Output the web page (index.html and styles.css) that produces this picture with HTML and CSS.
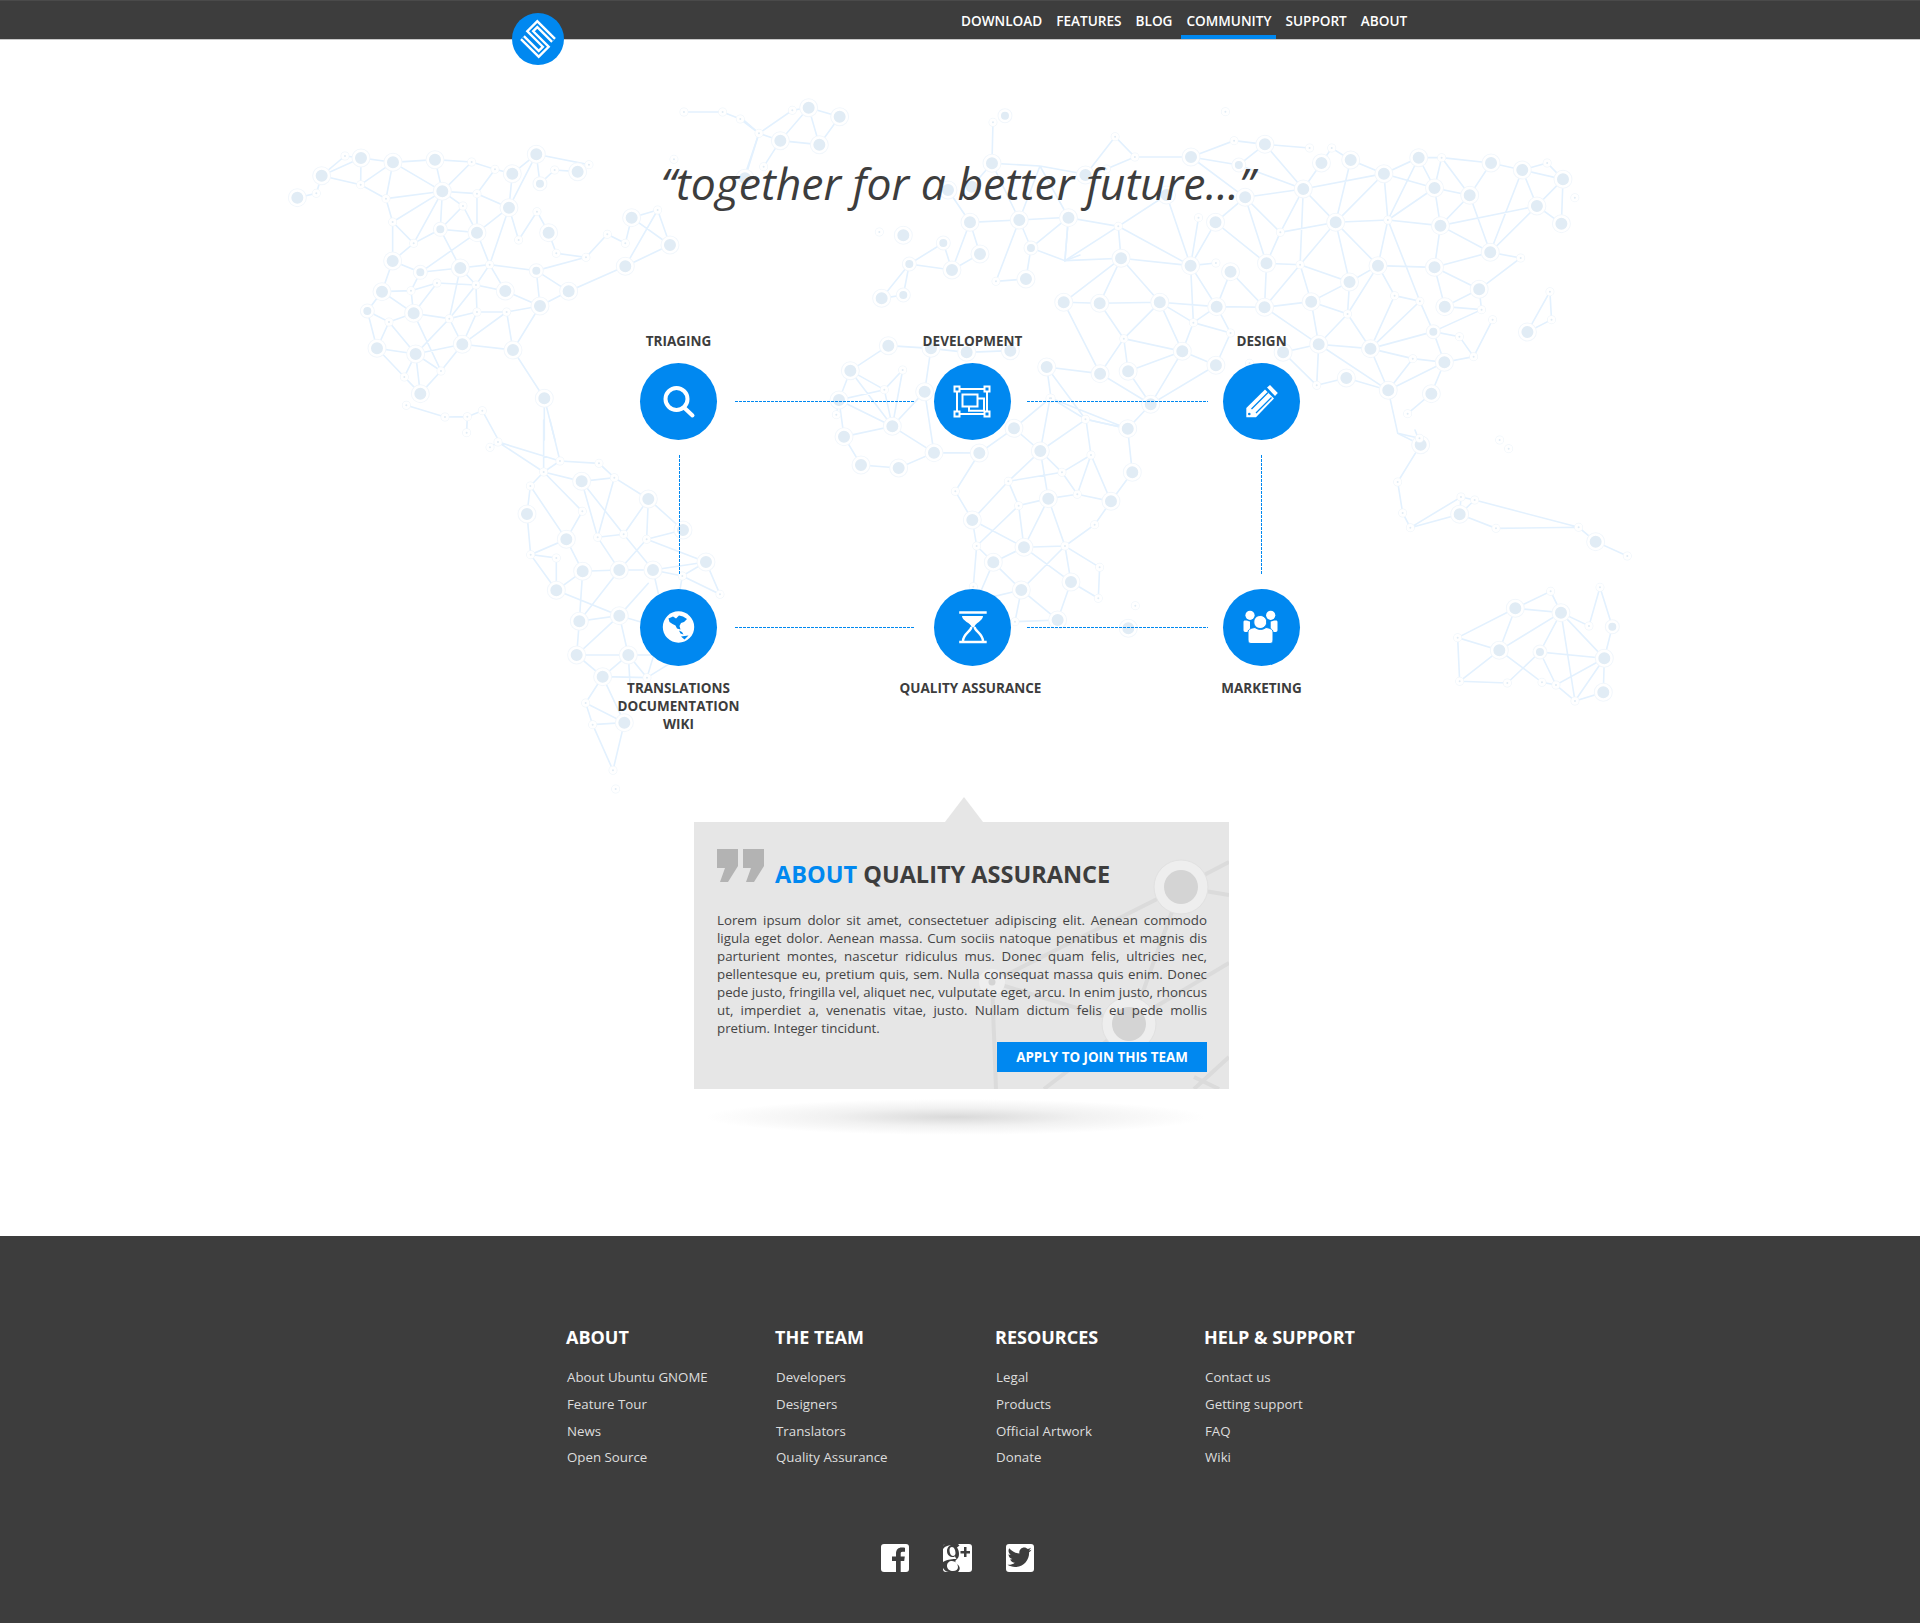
FILE: index.html
```html
<!DOCTYPE html>
<html lang="en">
<head>
    <meta charset="UTF-8">
    <title>Community - Ubuntu GNOME</title>
    <link rel="stylesheet" href="styles.css">
</head>
<body>
    <!-- world map behind the hero -->
    <svg class="map" width="1920" height="800" aria-hidden="true">
        <defs>
            <g id="nodes-big">
                <path transform="translate(280 100) scale(.3333)" d="M52 293h0M125 227h0M243 174h0M339 187h0M465 179h0M697 221h0M769 163h0M893 215h0M487 274h0M687 323h0M591 398h0M806 398h0M1055 353h0M1170 435h0M1036 499h0M338 483h0M541 504h0M866 574h0M676 573h0M780 618h0M306 575h0M401 640h0M547 733h0M407 762h0M291 745h0M699 750h0M421 881h0M793 895h0"/>
                <path transform="translate(740 90) scale(.3333)" d="M206 53h0M299 80h0M121 152h0M238 164h0M15 265h0M756 220h0M690 397h0M838 390h0M624 300h0M490 436h0M636 540h0M720 492h0M425 625h0M858 567h0M695 290h0"/>
                <path transform="translate(1040 100) scale(.3953 .3333)" d="M115 225h0M382 171h0M569 133h0M712 189h0M786 180h0M870 221h0M958 173h0M1141 189h0M1220 210h0M1323 238h0M1319 371h0M1257 318h0M998 264h0M1087 286h0M1013 377h0M1139 457h0M666 267h0M519 292h0M748 367h0M444 367h0M72 353h0M205 475h0M381 497h0M482 515h0M573 490h0M855 497h0M998 502h0M783 546h0M1111 568h0M686 605h0M60 607h0M151 610h0M303 607h0M447 620h0M568 622h0M1024 620h0M1233 696h0M705 733h0M836 746h0M360 754h0M445 796h0M17 801h0M152 821h0M223 814h0M615 757h0M1023 787h0M881 871h0M775 834h0M990 881h0M280 913h0M222 986h0M320 285h0"/>
                <path transform="translate(820 340) scale(.3333)" d="M205 17h0M333 25h0M440 37h0M571 32h0M91 92h0M314 155h0M217 259h0M72 290h0M123 375h0M236 384h0M342 338h0M478 339h0M582 265h0M661 333h0M937 397h0M873 484h0M685 476h0M457 540h0M612 622h0M520 667h0M604 750h0M753 726h0M713 840h0M925 865h0M57 180h0"/>
                <path transform="translate(480 420) scale(.3333)" d="M305 184h0M505 237h0M141 282h0M609 330h0M259 358h0M678 426h0M308 454h0M418 450h0M519 450h0M229 511h0M298 604h0M418 587h0M290 705h0M445 705h0M368 770h0M433 908h0"/>
                <path transform="translate(1340 430) scale(.3333)" d="M242 44h0M359 253h0M767 335h0M526 535h0M663 548h0M478 661h0M793 685h0M790 787h0"/>
            </g>
            <g id="nodes-mid">
                <path transform="translate(280 100) scale(.3333)" d="M780 251h0M481 388h0M421 517h0M769 512h0M262 633h0"/>
                <path transform="translate(740 90) scale(.3333)" d="M610 459h0M508 522h0M490 615h0M795 77h0M873 474h0"/>
                <path transform="translate(1040 100) scale(.3953 .3333)" d="M503 195h0M995 695h0"/>
                <path transform="translate(1340 430) scale(.3333)" d="M817 590h0M600 666h0"/>
            </g>
            <g id="nodes-small">
                <path transform="translate(280 100) scale(.3333)" d="M109 280h0M195 168h0M242 254h0M318 296h0M338 366h0M401 430h0M575 186h0M645 208h0M591 281h0M549 318h0M824 210h0M927 194h0M771 335h0M716 420h0M829 460h0M918 472h0M982 403h0M1036 430h0M1133 330h0M629 494h0M471 549h0M393 572h0M588 555h0M327 666h0M508 656h0M591 636h0M680 636h0M483 813h0M373 831h0M379 916h0M495 951h0M562 950h0M607 932h0M560 998h0M1212 36h0M1328 36h0M1381 57h0M1182 178h0"/>
                <path transform="translate(740 90) scale(.3333)" d="M157 61h0M57 130h0M71 230h0M759 97h0M418 426h0M768 574h0"/>
                <path transform="translate(1040 100) scale(.3953 .3333)" d="M469 35h0M190 110h0M240 171h0M491 122h0M682 144h0M738 144h0M168 207h0M1016 173h0M1283 189h0M1353 293h0M401 353h0M198 379h0M608 397h0M880 360h0M445 489h0M658 494h0M1216 474h0M897 587h0M961 604h0M778 642h0M1117 629h0M1145 659h0M1290 575h0M1294 659h0M388 668h0M212 716h0M482 699h0M1061 710h0M1097 770h0M943 776h0M700 856h0M930 941h0M28 895h0M115 958h0M530 790h0M960 1015h0"/>
                <path transform="translate(820 340) scale(.3333)" d="M248 90h0M193 149h0M49 224h0M690 175h0M813 345h0M726 397h0M565 424h0M772 463h0M596 497h0M406 454h0M824 554h0M470 618h0M735 618h0M839 682h0M835 775h0M946 797h0M585 845h0M460 740h0"/>
                <path transform="translate(480 420) scale(.3333)" d="M30 82h0M54 66h0M240 123h0M357 130h0M191 156h0M403 173h0M151 198h0M307 274h0M353 352h0M431 343h0M500 358h0M152 404h0M229 414h0M607 468h0M720 523h0M501 773h0M317 849h0M338 914h0M399 1051h0M407 1107h0"/>
                <path transform="translate(1340 430) scale(.3333)" d="M173 156h0M188 249h0M211 293h0M363 201h0M404 210h0M468 295h0M716 292h0M862 378h0M479 30h0M506 56h0M632 484h0M780 472h0M747 588h0M353 623h0M359 754h0M502 759h0M606 757h0M648 765h0M705 813h0"/>
            </g>
        </defs>
        <g class="edges">
            <path transform="translate(280 100) scale(.3333)" d="M52 293L109 280L125 227L195 168L243 174L125 227L242 254L243 174L339 187L242 254L318 296L339 187L465 179L487 274L339 187M465 179L575 186L645 208L591 281L487 274L575 186M645 208L697 221L687 323L769 163L697 221M769 163L780 251L824 210L893 215L927 194L769 163M318 296L487 274L549 318L591 398L481 388L487 274L401 430L338 366L487 274M318 296L338 366L338 483L401 430L481 388L549 318M591 281L591 398L687 323L591 281M687 323L629 494L591 398L421 517L338 483M687 323L716 420L771 335L806 398L829 460L918 472L982 403L1036 430L1055 353L1133 330L1036 499L1170 435L1133 330M1055 353L1170 435M1036 499L866 574L769 512L918 472M866 574L780 618L769 512L629 494L541 504L421 517M481 388L541 504L508 656L588 555L541 504M629 494L676 573L588 555L471 549L393 572L421 517L393 572L306 575L338 483M629 494L588 555L591 636L508 656L401 640L393 572M401 640L471 549M676 573L780 618L680 636L591 636L547 733L680 636L699 750L547 733L407 762L291 745L262 633L306 575L401 640L327 666L262 633M327 666L291 745M327 666L407 762L508 656L547 733M401 640L483 813L407 762L373 831L291 745M407 762L421 881L373 831M547 733L483 813L421 881M780 618L699 750L793 895L793 1020M793 895L825 1020M379 916L495 951L562 950L607 932L655 1020M562 950L560 998M1212 36L1328 36L1381 57L1437 100L1395 225"/>
            <path transform="translate(740 90) scale(.3333)" d="M5 85L57 130L157 61L206 53L121 152L57 130L15 265M121 152L71 230M206 53L299 80L238 164L206 53M121 152L238 164M759 97L756 220L900 228L1020 250M756 220L695 290M900 228L838 390L756 220M624 300L690 397L838 390L985 382L900 228M690 397L636 540L508 522L610 459L636 540L720 492L690 397M508 522L490 615L425 625L508 522M838 390L873 474L975 512L985 382L873 474L858 567L768 574L838 390M975 512L1020 495"/>
            <path transform="translate(1040 100) scale(.3953 .3333)" d="M190 110L240 171L168 207L115 225M190 110L115 225M240 171L382 171L491 122L569 133L682 144M382 171L503 195L666 267L569 133L503 195M382 171L519 292M712 189L666 267M712 189L738 144L786 180L870 221L666 267M786 180L748 367L870 221L958 173L1016 173L1141 189L1220 210L1283 189L1323 238L1220 210M1323 238L1257 318L1319 371L1323 238M870 221L880 360L958 173L998 264L870 221M998 264L1016 173L1087 286L998 264L1013 377L1087 286L1141 189M1220 210L1139 457L1087 286M1220 210L1257 318L1013 377L1139 457L1257 318M880 360L998 264M880 360L1013 377M748 367L880 360M666 267L748 367L608 397L666 267L658 494M519 292L666 267M519 292L573 490L444 367L519 292L608 397L573 490M444 367L381 497L401 353M320 285L381 497M320 285L198 379L72 353L63 482L198 379L205 475L63 482M198 379L381 497L205 475M381 497L388 668M381 497L445 489M381 497L447 620L482 515L568 622L573 490L658 494L568 622M658 494L748 367L855 497L783 546L748 367M658 494L783 546L686 605L658 494M855 497L880 360L961 604M855 497L998 502L1013 377M998 502L1139 457M998 502L1111 568L1216 474L1139 457M855 497L778 642L783 546M855 497L897 587L836 746L961 604L897 587M686 605L778 642L836 746L705 733L778 642M686 605L705 733L568 622L686 605M568 622L447 620L388 668L303 607L447 620M1111 568L1024 620L998 502M1111 568L1117 629L1024 620M1117 629L995 695L1061 710L1097 770L1145 659M961 604L995 695L836 746L943 776L1023 787L995 695M943 776L881 871L1023 787L1097 770M1023 787L990 881L930 941M836 746L881 871L705 733L700 856L615 757L705 733L836 746M775 834L700 856M775 834L881 871L905 1000L960 1015M60 607L151 610L303 607L205 475L60 607M151 610L205 475M303 607L212 716L151 610M212 716L360 754L303 607M388 668L482 699L447 620M388 668L360 754L445 796L482 699M360 754L280 913L223 814L212 716L152 821L60 607M223 814L360 754M17 801L152 821L280 913M17 801L28 895L115 958L222 986L280 913L445 796M17 801L115 958M28 895L222 986M1233 696L1290 575L1294 659L1233 696"/>
            <path transform="translate(820 340) scale(.3333)" d="M205 17L91 92L57 180L217 259L91 92M91 92L193 149L217 259L248 90L193 149L57 180L49 224M72 290L217 259L314 155L333 25L205 17M57 180L72 290L123 375L236 384L342 338L217 259M314 155L342 338L478 339L582 265L690 175M333 25L440 37L571 32M582 265L661 333M478 339L406 454L457 540L470 618L520 667L612 622L457 540L565 424L661 333L690 175M661 333L798 238L813 345L726 397L565 424M661 333L726 397L772 463L813 345L873 484L772 463L685 476L596 497L565 424M661 333L685 476L612 622L596 497L470 618M685 476L735 618L612 622M735 618L824 554L873 484L937 397L923 266L798 238M612 622L753 726L735 618L839 682L835 775L753 726L713 840L604 750L735 618M520 667L604 750L585 845L713 840M470 618L460 740M520 667L480 760M604 750L520 770"/>
            <path transform="translate(480 420) scale(.3333)" d="M30 82L54 66L240 123L191 156L54 66M191 0L191 156M210 0L240 123L357 130L403 173L505 237L609 330M191 156L305 184L403 173L353 352L305 184L431 343L505 237L500 358L609 330M500 358L678 426M191 156L151 198L141 282L152 404L229 511M151 198L259 358L152 404L229 414L229 511L308 454L259 358L307 274L191 156M308 454L418 450L519 450L678 426M353 352L418 450L500 358M353 352L431 343L519 450L607 468L678 426L720 523L607 468L600 510M519 450L535 520M418 450L298 604L308 454M229 511L418 587L298 604L290 705L418 587L445 705L290 705L368 770L445 705L501 773L368 770L317 849L338 914L433 908L317 849M505 490L418 587L480 605M501 773L520 710M445 705L520 705M501 773L570 730M368 770L433 908L399 1051L338 914M445 705L450 790"/>
            <path transform="translate(1340 430) scale(.3333)" d="M177 12L242 44L225 0M242 44L173 156L188 249L211 293L363 201L404 210L359 253L211 293M363 201L359 253L468 295L716 292L767 335L862 378M404 210L716 292M353 623L526 535L632 484L663 548L526 535L478 661L353 623L359 754L478 661L663 548L747 588L780 472L817 590L793 685L663 548L600 666L793 685L648 765L600 666L502 759L359 754M478 661L606 757L648 765L705 813L663 548M705 813L793 685L790 787L705 813"/>
        </g>
        <use href="#nodes-big" class="ring-big"/>
        <use href="#nodes-big" class="gap-big"/>
        <use href="#nodes-big" class="core-big"/>
        <use href="#nodes-mid" class="ring-mid"/>
        <use href="#nodes-mid" class="gap-mid"/>
        <use href="#nodes-mid" class="core-mid"/>
        <use href="#nodes-small" class="ring-small"/>
        <use href="#nodes-small" class="gap-small"/>
        <use href="#nodes-small" class="core-small"/>
    </svg>

    <header class="topbar">
        <a class="logo" href="#">
            <svg width="52" height="52" viewBox="0 0 52 52">
                <circle cx="26" cy="26" r="26" fill="#0088f0"/>
                <g transform="rotate(45 26 26)" fill="none">
                    <path d="M38 16H15V26H37V36H14" stroke="#fff" stroke-width="6.500"/>
                    <path d="M38 16H15V26H37V36H14" stroke="#0088f0" stroke-width="1.800"/>
                </g>
            </svg>
        </a>
        <nav class="mainnav">
            <a href="#">DOWNLOAD</a>
            <a href="#">FEATURES</a>
            <a href="#">BLOG</a>
            <a href="#" class="active">COMMUNITY</a>
            <a href="#">SUPPORT</a>
            <a href="#">ABOUT</a>
        </nav>
    </header>

    <main>
        <h1 class="motto">“together for a better future...”</h1>

        <div class="teams">
            <div class="label">TRIAGING</div>
            <div></div>
            <div class="label">DEVELOPMENT</div>
            <div></div>
            <div class="label">DESIGN</div>

            <div class="bubble">
                <svg width="77" height="77" viewBox="0 0 77 77" fill="none" stroke="#fff">
                    <circle cx="36.500" cy="36" r="11" stroke-width="4"/>
                    <path d="M44.500 45L52.500 52.500" stroke-width="4" stroke-linecap="round"/>
                </svg>
            </div>
            <div class="link-h link-a"></div>
            <div class="bubble">
                <svg width="77" height="77" viewBox="0 0 77 77" fill="none" stroke="#fff" stroke-width="2">
                    <rect x="23" y="26" width="30" height="25"/>
                    <rect x="28.500" y="31.500" width="15" height="12"/>
                    <path d="M43.500 35.500H50V47.800H35V43.500"/>
                    <g fill="#0088f0">
                        <rect x="20.500" y="23.500" width="5" height="5"/>
                        <rect x="50.500" y="23.500" width="5" height="5"/>
                        <rect x="20.500" y="48.500" width="5" height="5"/>
                        <rect x="50.500" y="48.500" width="5" height="5"/>
                    </g>
                </svg>
            </div>
            <div class="link-h link-b"></div>
            <div class="bubble">
                <svg width="77" height="77" viewBox="0 0 77 77" fill="#fff">
                    <path d="M23.300 45L42 26.500L51 35.500L33 54.200H23.300Z"/>
                    <path d="M44 24.500L47 22L54.800 30L52 33Z"/>
                    <path d="M28.500 46L45 29.500M33 50L48.500 34.500" stroke="#0088f0" stroke-width="1.300"/>
                    <circle cx="26.300" cy="51" r="1.300" fill="#0088f0"/>
                </svg>
            </div>

            <div class="link-v link-v-left"></div>
            <div></div>
            <div></div>
            <div></div>
            <div class="link-v"></div>

            <div class="bubble">
                <svg width="77" height="77" viewBox="0 0 77 77">
                    <circle cx="38.500" cy="38" r="15.700" fill="#fff"/>
                    <path fill="#0088f0" d="M28.500 29.500L33 27.500L36 29.500L39 26.500L43 27.500L47 30L44 33L41 34L39.500 37L40.500 40.500L37 39.500L35.500 36.500L32.500 35L29.500 33ZM39 41.500L42 43L43.500 45.500L40.500 44.500ZM41 47.500L48.500 46.500L44.500 50.500Z"/>
                </svg>
            </div>
            <div class="link-h link-a"></div>
            <div class="bubble">
                <svg width="77" height="77" viewBox="0 0 77 77" fill="#fff">
                    <path d="M25.200 22.300H52.700V24.700H25.200ZM25.200 51.800H52.700V54.200H25.200Z"/>
                    <path d="M28 27H49C49 32 41 34 40.500 38H37.500C37 34 28 32 28 27Z"/>
                    <path d="M37.500 38C37 42 29 45 29 52M40.500 38C41 42 49 45 49 52" fill="none" stroke="#fff" stroke-width="2.400"/>
                </svg>
            </div>
            <div class="link-h link-b"></div>
            <div class="bubble">
                <svg width="77" height="77" viewBox="0 0 77 77" fill="#fff">
                    <circle cx="27" cy="26.300" r="4.600"/>
                    <circle cx="47.700" cy="26.300" r="4.600"/>
                    <path d="M20.500 33C20.500 30.500 24 31.500 27 32.500V43H22.500C21 43 20.500 42 20.500 41ZM54.500 33C54.500 30.500 51 31.500 47.700 32.500V43H52.500C54 43 54.500 42 54.500 41Z"/>
                    <path d="M37.200 26.500C41 26.500 43.700 29.500 43.700 33C43.700 36.500 41 39.500 37.200 39.500C33.500 39.500 30.800 36.500 30.800 33C30.800 29.500 33.500 26.500 37.200 26.500Z" stroke="#0088f0"/>
                    <path d="M25 43C25 40 29 39 32 38.500C35 41 40 41 43 38.500C46 39 50 40 50 43V51C50 53 49 54.500 47 54.500H28C26 54.500 25 53 25 51Z" stroke="#0088f0"/>
                </svg>
            </div>

            <div class="label label-below">TRANSLATIONS<br>DOCUMENTATION<br>WIKI</div>
            <div></div>
            <div class="label label-below qa-label">QUALITY ASSURANCE</div>
            <div></div>
            <div class="label label-below">MARKETING</div>
        </div>

        <section class="about">
            <svg class="about-bg" width="535" height="267" aria-hidden="true">
                <path fill="none" stroke="#dbdbdb" stroke-width="4" d="M487 65L535 40M487 65L535 73M487 65L298 160L302 267M487 65L475 98L447 175L435 202L298 160M451 191L535 141M435 202L350 267M535 235L500 267M500 255L525 267"/>
                <circle cx="487" cy="65" r="27" fill="#eeeeee" stroke="#e1e1e1"/>
                <circle cx="487" cy="65" r="17" fill="#d4d4d4"/>
                <circle cx="435" cy="202" r="27" fill="#eeeeee" stroke="#e1e1e1"/>
                <circle cx="435" cy="202" r="17" fill="#d4d4d4"/>
                <circle cx="298" cy="160" r="13" fill="#eeeeee"/>
                <circle cx="298" cy="160" r="3.500" fill="#d4d4d4"/>
            </svg>
            <div class="about-head">
                <svg class="quote-mark" width="47" height="33" viewBox="0 0 47 33" fill="#b3b3b3">
                    <path d="M0 0H21V17L11 33H3L8 19H0ZM26 0H47V17L37 33H29L34 19H26Z"/>
                </svg>
                <h2><span class="blue">ABOUT</span> QUALITY ASSURANCE</h2>
            </div>
            <p>Lorem ipsum dolor sit amet, consectetuer adipiscing elit. Aenean commodo ligula eget dolor. Aenean massa. Cum sociis natoque penatibus et magnis dis parturient montes, nascetur ridiculus mus. Donec quam felis, ultricies nec, pellentesque eu, pretium quis, sem. Nulla consequat massa quis enim. Donec pede justo, fringilla vel, aliquet nec, vulputate eget, arcu. In enim justo, rhoncus ut, imperdiet a, venenatis vitae, justo. Nullam dictum felis eu pede mollis pretium. Integer tincidunt.</p>
            <a class="apply" href="#">APPLY TO JOIN THIS TEAM</a>
        </section>
        <div class="about-shadow"></div>
    </main>

    <footer>
        <div class="footer-cols">
            <div>
                <h3>ABOUT</h3>
                <ul>
                    <li>About Ubuntu GNOME</li>
                    <li>Feature Tour</li>
                    <li>News</li>
                    <li>Open Source</li>
                </ul>
            </div>
            <div>
                <h3>THE TEAM</h3>
                <ul>
                    <li>Developers</li>
                    <li>Designers</li>
                    <li>Translators</li>
                    <li>Quality Assurance</li>
                </ul>
            </div>
            <div>
                <h3>RESOURCES</h3>
                <ul>
                    <li>Legal</li>
                    <li>Products</li>
                    <li>Official Artwork</li>
                    <li>Donate</li>
                </ul>
            </div>
            <div>
                <h3>HELP &amp; SUPPORT</h3>
                <ul>
                    <li>Contact us</li>
                    <li>Getting support</li>
                    <li>FAQ</li>
                    <li>Wiki</li>
                </ul>
            </div>
        </div>
        <div class="social">
            <svg width="28" height="28" viewBox="0 0 28 28">
                <rect width="28" height="28" rx="3" fill="#fff"/>
                <path fill="#3d3d3d" d="M15 28V17H11V12.500H15V9.500C15 5.500 17.500 3.500 20.500 3.500C22 3.500 23.500 3.600 24 3.700V7.800H21.500C20 7.800 19.700 8.500 19.700 9.800V12.500H23.800L23.200 17H19.700V28Z"/>
            </svg>
            <svg width="29" height="28" viewBox="0 0 29 28">
                <rect width="29" height="28" rx="3" fill="#fff"/>
                <path fill="#3d3d3d" d="M21 3H23.500V7H27V9.500H23.500V13H21V9.500H17.500V7H21Z"/>
                <path fill="#3d3d3d" d="M15 0H3C0 0 0 2 0 3V5C2 2 6 1 9 1C7 1 4 3 4 7C4 11 7 13 10 13C11 13 12 12.500 12 12C12 13 13 14 13.500 15C10 15 5 15 0 18V24C2 27 4 28 6 28H15C17 26 18 23 14 20C12 18 12 17 13 16C15 14.500 16 13 16 10C16 7 15 5 14 3.500L16.500 1.500ZM9 3C11 3 12.500 6 12.500 9C12.500 11 11.500 12 10 12C8 12 6.500 9 6.500 6C6.500 4 7.500 3 9 3ZM9 17C12 17 15 20 15 23C15 25.500 13 27 10 27C7 27 4 25 4 22C4 19 6 17 9 17Z"/>
            </svg>
            <svg width="28" height="28" viewBox="0 0 28 28">
                <rect width="28" height="28" rx="3" fill="#fff"/>
                <path fill="#3d3d3d" d="M25.500 5.700C24.600 6.100 23.700 6.400 22.700 6.500C23.700 5.900 24.500 4.900 24.900 3.800C24 4.400 22.900 4.800 21.800 5C20.900 4 19.600 3.400 18.200 3.400C15.500 3.400 13.300 5.600 13.300 8.300C13.300 8.700 13.300 9.100 13.400 9.400C9.300 9.200 5.700 7.200 3.200 4.200C2.800 4.900 2.500 5.800 2.500 6.700C2.500 8.400 3.400 9.900 4.700 10.800C3.900 10.800 3.100 10.600 2.500 10.200V10.300C2.500 12.700 4.200 14.700 6.400 15.100C6 15.200 5.600 15.300 5.100 15.300C4.800 15.300 4.500 15.300 4.200 15.200C4.800 17.200 6.700 18.600 8.800 18.700C7.100 20 5 20.800 2.700 20.800C2.300 20.800 1.900 20.800 1.500 20.700C3.700 22.100 6.300 22.900 9.100 22.900C18.200 22.900 23.100 15.400 23.100 8.900V8.300C24 7.600 24.900 6.700 25.500 5.700Z"/>
            </svg>
        </div>
    </footer>
</body>
</html>
```

FILE: styles.css
```css
body {
    margin: 0;
    background-color: #fff;
    color: #3d3d3d;
    font-family: "Open Sans", sans-serif;
}

a {
    text-decoration: none;
}

/* map */
.map {
    position: absolute;
    top: 0;
    left: 0;
    z-index: -1;
}

.map path {
    fill: none;
    stroke-linecap: round;
    vector-effect: non-scaling-stroke;
}

.edges {
    stroke: #e3f1fe;
    stroke-width: 1.600;
}

.ring-big { stroke: #f2f7fc; stroke-width: 19; }
.gap-big { stroke: #fff; stroke-width: 17; }
.core-big { stroke: #e1ecf5; stroke-width: 12; }
.ring-mid { stroke: #f2f7fc; stroke-width: 15; }
.gap-mid { stroke: #fff; stroke-width: 13; }
.core-mid { stroke: #e1ecf5; stroke-width: 8; }
.ring-small { stroke: #f0f6fb; stroke-width: 9; }
.gap-small { stroke: #fff; stroke-width: 7.500; }
.core-small { stroke: #e1ecf5; stroke-width: 2; }

/* top bar */
.topbar {
    position: relative;
    box-sizing: border-box;
    height: 40px;
    background-color: #3d3d3d;
    border-top: 1px solid #4a4a4a;
    border-bottom: 1px solid #c8c8c8;
}

.logo {
    position: absolute;
    top: 12px;
    left: 512px;
    display: block;
    height: 52px;
}

.mainnav {
    display: flex;
    gap: 4px;
    margin-left: 956px;
    height: 38px;
}

.mainnav a {
    box-sizing: border-box;
    height: 38px;
    padding: 0 5px;
    color: #fff;
    font-size: 13.600px;
    font-weight: 600;
    line-height: 39px;
}

.mainnav a.active {
    border-bottom: 4px solid #0088f0;
}

/* hero */
.motto {
    margin: 113px 0 0;
    padding-right: 5px;
    text-align: center;
    font-size: 44.500px;
    font-style: italic;
    font-weight: 400;
    line-height: 60px;
    color: #3d3d3d;
}

.teams {
    display: grid;
    grid-template-columns: 77px 217px 77px 212px 77px;
    grid-template-rows: 31px 77px 149px 77px auto;
    margin: 119px 0 0 640px;
    width: 660px;
}

.label {
    justify-self: center;
    font-size: 13.500px;
    font-weight: 700;
    line-height: 18px;
    text-align: center;
    white-space: nowrap;
}

.label-below {
    padding-top: 13px;
}

.qa-label {
    position: relative;
    left: -2px;
}

.bubble {
    width: 77px;
    height: 77px;
    border-radius: 50%;
    background-color: #0088f0;
}

.bubble svg {
    display: block;
}

.link-h {
    align-self: center;
    height: 1px;
    background: repeating-linear-gradient(90deg, #0088f0 0 3px, transparent 3px 4px);
}

.link-a {
    margin: 0 19px 0 18px;
}

.link-b {
    margin: 0 15px 0 16px;
}

.link-v {
    justify-self: center;
    width: 1px;
    margin: 15px 0;
    background: repeating-linear-gradient(180deg, #0088f0 0 3px, transparent 3px 4px);
}

.link-v-left {
    margin-left: 2px;
}

/* about box */
.about {
    position: relative;
    box-sizing: border-box;
    width: 535px;
    height: 267px;
    margin: 89px 0 0 694px;
    padding: 27px 22px 0 23px;
    background-color: #e6e6e6;
}

.about::before {
    content: "";
    position: absolute;
    top: -25px;
    left: 251px;
    border-left: 19px solid transparent;
    border-right: 19px solid transparent;
    border-bottom: 25px solid #e6e6e6;
}

.about-bg {
    position: absolute;
    top: 0;
    left: 0;
}

.about-head {
    position: relative;
    display: flex;
    gap: 11px;
    height: 42px;
}

.quote-mark {
    flex: none;
}

.about h2 {
    margin: 8px 0 0;
    font-size: 23.500px;
    font-weight: 700;
    line-height: 34px;
    white-space: nowrap;
}

.blue {
    color: #0088f0;
}

.about p {
    position: relative;
    margin: 20px 0 0;
    font-size: 13.300px;
    line-height: 18px;
    text-align: justify;
    color: #444;
}

.apply {
    position: relative;
    display: block;
    width: 210px;
    height: 30px;
    margin: 5px 0 0 auto;
    background-color: #0088f0;
    color: #fff;
    font-size: 13.400px;
    font-weight: 700;
    line-height: 30px;
    text-align: center;
}

.about-shadow {
    width: 500px;
    height: 36px;
    margin: 10px 0 0 705px;
    background: radial-gradient(ellipse closest-side, #d9d9d9 0%, rgba(232, 232, 232, .6) 50%, rgba(255, 255, 255, 0) 100%);
}

/* footer */
footer {
    box-sizing: border-box;
    height: 388px;
    margin-top: 101px;
    padding-top: 89px;
    background-color: #3d3d3d;
    color: #fff;
}

.footer-cols {
    display: grid;
    grid-template-columns: 209px 220px 209px auto;
    margin-left: 566px;
}

footer h3 {
    margin: 0;
    font-size: 18px;
    font-weight: 700;
    line-height: 24px;
}

footer ul {
    margin: 15px 0 0;
    padding: 0 0 0 1px;
    list-style: none;
}

footer li {
    font-size: 13.300px;
    line-height: 26.800px;
    color: #ddd;
}

.social {
    display: flex;
    gap: 34px;
    margin: 73px 0 0 881px;
}
```
